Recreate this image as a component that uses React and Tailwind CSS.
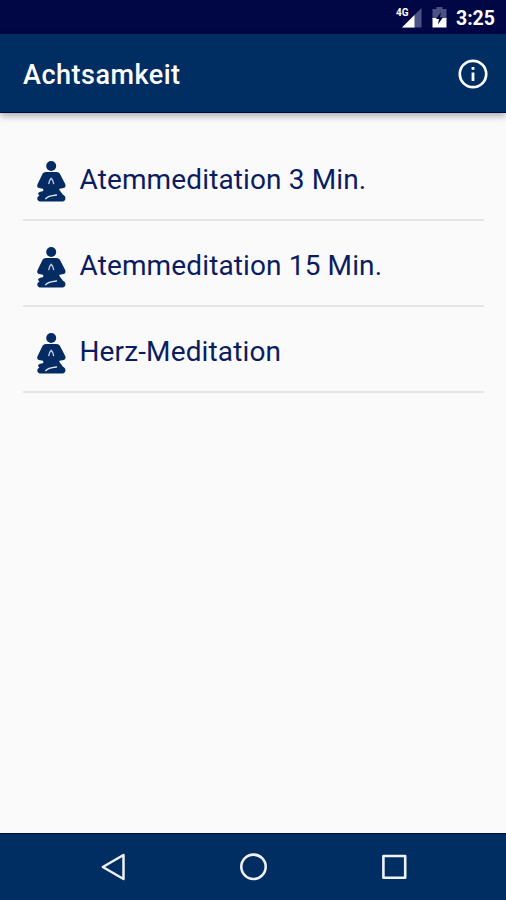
import React from 'react';

const meditations = ['Atemmeditation 3 Min.', 'Atemmeditation 15 Min.', 'Herz-Meditation'];

function MeditationIcon() {
  return (
    <svg className="w-[31px] h-[43px] shrink-0 mt-[2px]" viewBox="0 0 31 43" fill="#052c62">
      <circle cx="15.2" cy="6" r="5" />
      {/* Torso and arms */}
      <path d="M10 12H20.5C22.5 12 23.6 13 24.4 14.8L29.2 24C30 26 29.4 27.6 27.7 28L23.5 28.8L22.5 32H8L7 28.8L3 28C1.2 27.6 .7 26 1.6 24L6.1 14.8C6.9 13 8 12 10 12Z" />
      {/* Crossed legs */}
      <path d="M7.5 29.5H23L27 34.8C30.5 36 30.2 41.5 26.5 41.5H5C.5 41.5 .2 36.8 3.5 35.4L2.2 34.2C1.5 32.4 4.5 31.4 7.5 30.9Z" />
      <path d="M12.8 23.5C13.2 21 14 19.5 15.2 18.3C16.4 19.5 17.2 21 17.6 23.5" fill="none" stroke="#b5c5dd" strokeWidth="1.5" strokeLinecap="round" strokeLinejoin="round" />
      <path d="M9.8 38.7C11 36.6 14 35.6 20.5 34.9" fill="none" stroke="#dbe3ee" strokeWidth="1.5" strokeLinecap="round" />
    </svg>
  );
}

function StatusBar() {
  return (
    <div className="h-[34px] shrink-0 bg-[#000744] flex items-center justify-end pr-[11px] pt-[2px] text-white">
      <svg className="w-[28px] h-[22px] mr-[10px]" viewBox="0 0 28 22">
        <path d="M27.5 1V20.5H8Z" fill="#4c5283" />
        <path d="M20.5 8V20.5H8Z" fill="#fff" />
        <text x="2" y="9" fill="#fff" fontSize="10" fontWeight="700" fontFamily="Roboto, sans-serif">4G</text>
      </svg>
      <svg className="w-[15px] h-[22px] mr-[9px]" viewBox="0 0 15 22">
        <path d="M4.5 0H10.5V2H14.5V12H.5V2H4.5Z" fill="#4c5283" />
        <path d="M.5 11H14.5V20.5H.5Z" fill="#fff" />
        <path d="M9 5L4 12H7L6 17.5L11 10.3H8Z" fill="#000744" />
      </svg>
      <span className="pt-[2px] text-[19.5px] leading-none font-bold">3:25</span>
    </div>
  );
}

export default function App() {
  return (
    <div className="w-[506px] h-[900px] flex flex-col bg-[#fafafa] overflow-hidden font-[Roboto,sans-serif]">
      <StatusBar />

      <header className="h-[79px] shrink-0 bg-[#002d62] border-b border-[#00094b] flex items-center justify-between pl-[23px] pr-[18px] text-white shadow-[0_3px_7px_rgba(0,0,0,0.32)]">
        <h1 className="text-[27px] leading-none font-medium tracking-[0.5px] pt-[4px]">Achtsamkeit</h1>
        <svg className="w-[30px] h-[30px] mt-[1px]" viewBox="0 0 30 30">
          <circle cx="15" cy="15" r="13.2" fill="none" stroke="#fff" strokeWidth="2.7" />
          <path d="M13.6 8H16.4V10.8H13.6ZM13.6 13.4H16.4V22H13.6Z" fill="#fff" />
        </svg>
      </header>

      <main className="flex-1 pt-[22px] pl-[23px] pr-[22px]">
        <ul>
          {meditations.map((title) => (
            <li key={title} className="h-[86px] flex items-center pl-[13px] pt-[7px] border-b-2 border-[#e5e5e5]">
              <MeditationIcon />
              <span className="pl-[12.5px] pb-[2px] text-[28px] leading-none tracking-[0.13px] whitespace-nowrap text-[#0b1c60]">{title}</span>
            </li>
          ))}
        </ul>
      </main>

      {/* Android navigation bar */}
      <nav className="h-[67px] shrink-0 bg-[#002d62] border-t border-[#00094b] flex items-center justify-between pl-[100px] pr-[98px]">
        <svg className="w-[28px] h-[30px]" viewBox="0 0 28 30" fill="none" stroke="#f0f1f8" strokeWidth="2.5" strokeLinejoin="round">
          <path d="M23.5 3V27L2.8 15Z" />
        </svg>
        <svg className="w-[28px] h-[28px]" viewBox="0 0 28 28" fill="none" stroke="#f0f1f8" strokeWidth="2.6">
          <circle cx="13.5" cy="13.8" r="12.2" />
        </svg>
        <svg className="w-[28px] h-[28px]" viewBox="0 0 28 28" fill="none" stroke="#f0f1f8" strokeWidth="2.6" strokeLinejoin="round">
          <rect x="3.4" y="3" width="21.8" height="21.8" />
        </svg>
      </nav>
    </div>
  );
}
